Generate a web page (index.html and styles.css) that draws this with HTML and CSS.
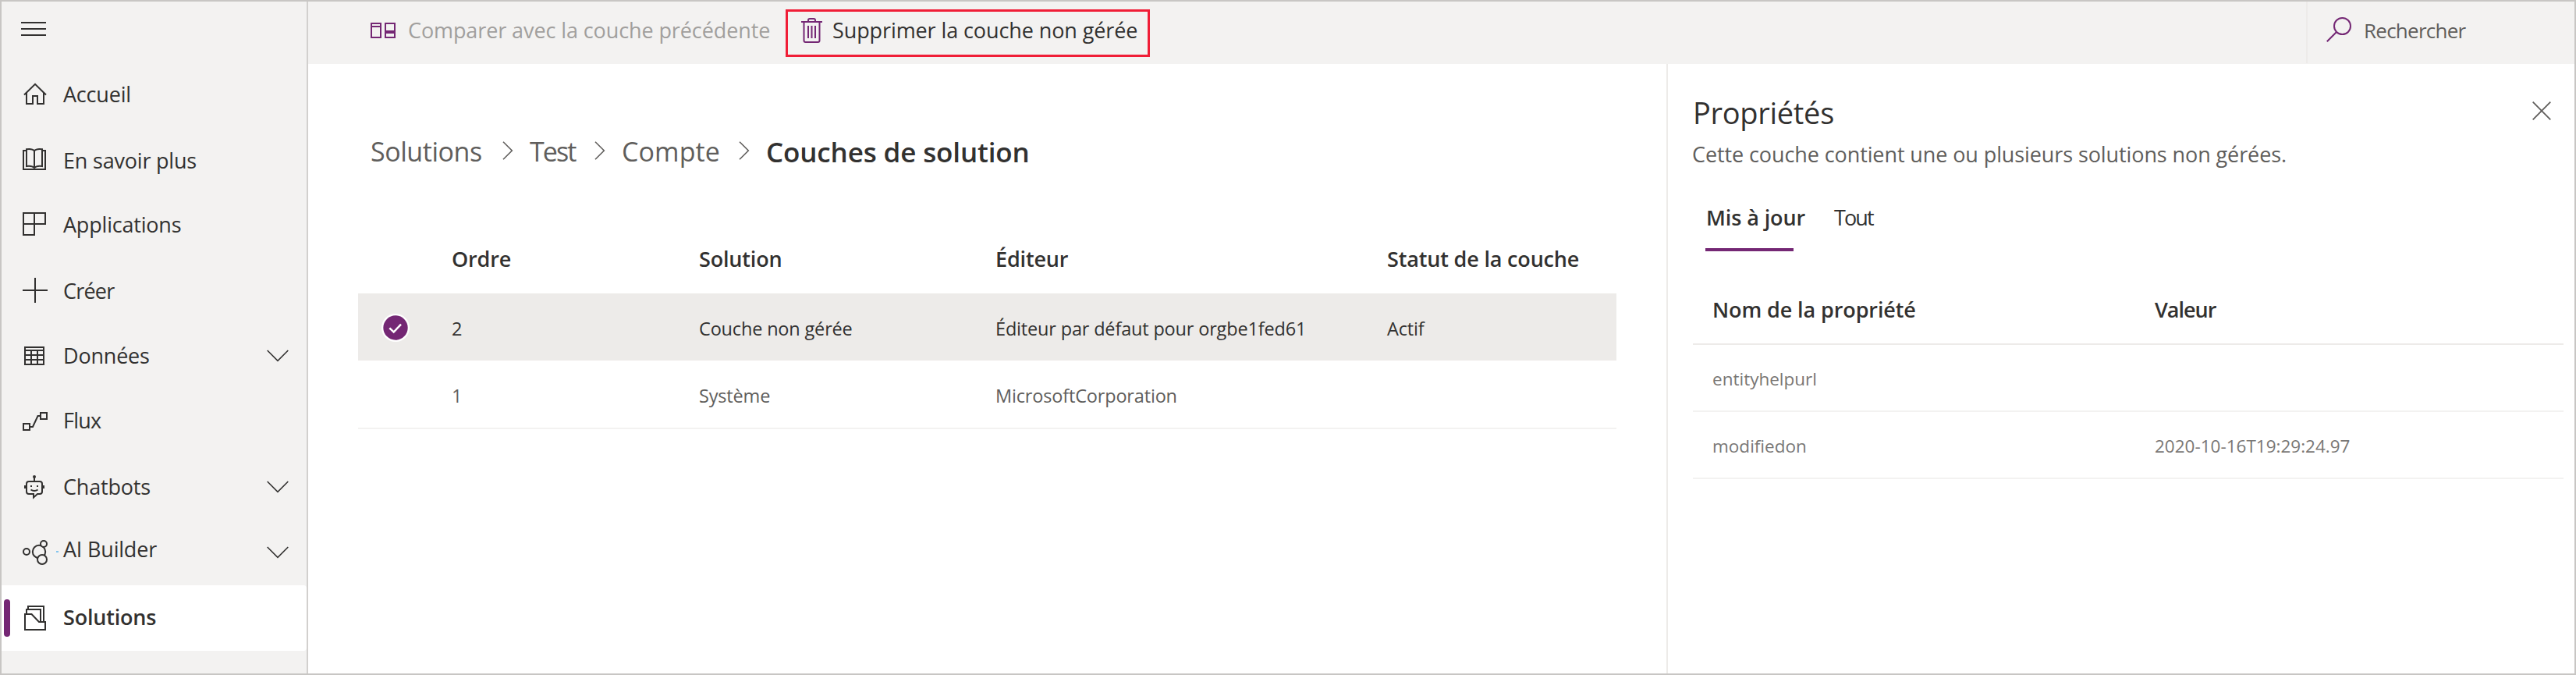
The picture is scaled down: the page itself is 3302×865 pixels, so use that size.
FILE: index.html
```html
<!DOCTYPE html>
<html lang="fr">
<head>
    <meta charset="UTF-8">
    <meta name="viewport" content="width=device-width, initial-scale=1.0">
    <title>Couches de solution</title>
    <link rel="stylesheet" href="styles.css">
</head>
<body>
    <nav class="sidebar">
        <div class="menu-toggle">
            <span></span><span></span><span></span>
        </div>
        <a class="nav-item home">
            <svg class="icon" viewBox="0 0 32 32"><path d="M2 17.5L16 3.8L30 17.5M5 15V29H13V19H19V29H27V15"/></svg>
            <span class="nav-label">Accueil</span>
        </a>
        <a class="nav-item learn">
            <svg class="icon" viewBox="0 0 32 32"><path d="M5 5H1V29H29V5H25M5 25V3.2C9 2.6 13 3 15 5.2C17 3 21 2.6 25 3.2V25C21 24.5 17 25 15 27C13 25 9 24.5 5 25ZM15 5V27"/></svg>
            <span class="nav-label">En savoir plus</span>
        </a>
        <a class="nav-item">
            <svg class="icon" viewBox="0 0 32 32"><path d="M1 1H29V15H1ZM1 1V29H15V1"/></svg>
            <span class="nav-label">Applications</span>
        </a>
        <a class="nav-item create">
            <svg class="icon" viewBox="0 0 32 32"><path d="M16 0V32M0 16H32"/></svg>
            <span class="nav-label">Créer</span>
        </a>
        <a class="nav-item">
            <svg class="icon" viewBox="0 0 32 32"><path d="M3 5H27V27H3ZM3 9H27M3 15H27M3 21H27M11 9V27M19 9V27"/></svg>
            <span class="nav-label">Données</span>
            <svg class="chevron" viewBox="0 0 28 16"><path d="M.7 1L14 14.3L27.3 1"/></svg>
        </a>
        <a class="nav-item flow">
            <svg class="icon" viewBox="0 0 32 32"><path d="M1 19H9V27H1ZM23 5H31V13H23ZM9 23H13L19.5 9H23"/></svg>
            <span class="nav-label">Flux</span>
        </a>
        <a class="nav-item">
            <svg class="icon" viewBox="0 0 32 32">
                <path d="M15 3V9M8 9H22Q25 9 25 12V22Q25 25 22 25H19L14 29.5V25H8Q5 25 5 22V12Q5 9 8 9ZM10.5 19.5Q15 22.5 19.5 19.5"/>
                <path class="solid" d="M2 14H5V18H2ZM25 14H28V18H25ZM10 14H12V16H10ZM18 14H20V16H18Z"/>
                <circle class="solid" cx="15" cy="3" r="2"/>
            </svg>
            <span class="nav-label">Chatbots</span>
            <svg class="chevron" viewBox="0 0 28 16"><path d="M.7 1L14 14.3L27.3 1"/></svg>
        </a>
        <a class="nav-item ai">
            <svg class="icon" viewBox="0 0 32 32">
                <circle cx="5" cy="15" r="4"/>
                <circle class="bubble" cx="21" cy="15" r="8.2"/>
                <circle class="bubble" cx="27" cy="5" r="4"/>
                <circle class="bubble" cx="25" cy="25" r="6"/>
                <path class="dash" d="M43 15H46"/>
            </svg>
            <span class="nav-label">AI Builder</span>
            <svg class="chevron" viewBox="0 0 28 16"><path d="M.7 1L14 14.3L27.3 1"/></svg>
        </a>
        <a class="nav-item active">
            <svg class="icon" viewBox="0 0 32 32"><path d="M3 11H11.5L21 21H29V31H3ZM5 11V5H23V21M7 5V1H27V21"/></svg>
            <span class="nav-label">Solutions</span>
        </a>
    </nav>

    <div class="page">
        <header class="toolbar">
            <button class="command compare" disabled>
                <svg width="32" height="20" viewBox="0 0 32 20"><path d="M1 1H13V19H1ZM1 5H13M19 1H31V19H19Z"/><path d="M19 12H31" stroke-width="4"/></svg>
                Comparer avec la couche précédente
            </button>
            <button class="command delete">
                <svg width="27" height="32" viewBox="0 0 27 32"><path d="M0 5H27M9 5V3Q9 1 11 1H16Q18 1 18 3V5M3.5 5V29Q3.5 31 5.5 31H21.5Q23.5 31 23.5 29V5M9 10V26M13.5 10V26M18 10V26"/></svg>
                Supprimer la couche non gérée
            </button>
            <div class="search">
                <svg width="32" height="32" viewBox="0 0 32 32"><circle cx="20.5" cy="11.5" r="10.5"/><path d="M13 19L.8 31.2"/></svg>
                <span>Rechercher</span>
            </div>
        </header>

        <div class="body">
            <main class="content">
                <div class="breadcrumb">
                    <span class="crumb">Solutions <svg class="sep" viewBox="0 0 14 24"><path d="M1 .7L12.3 12L1 23.3"/></svg></span>
                    <span class="crumb test">Test <svg class="sep" viewBox="0 0 14 24"><path d="M1 .7L12.3 12L1 23.3"/></svg></span>
                    <span class="crumb compte">Compte <svg class="sep" viewBox="0 0 14 24"><path d="M1 .7L12.3 12L1 23.3"/></svg></span>
                    <span class="crumb current">Couches de solution</span>
                </div>

                <div class="layers">
                    <div class="layer-row layer-head">
                        <span></span>
                        <span>Ordre</span>
                        <span>Solution</span>
                        <span>Éditeur</span>
                        <span>Statut de la couche</span>
                    </div>
                    <div class="layer-row selected">
                        <svg class="check" width="36" height="36" viewBox="0 0 36 36">
                            <circle cx="18" cy="18" r="18" fill="#fff"/>
                            <circle cx="18" cy="18" r="15.7" fill="#742774"/>
                            <path d="M10.3 18.3L15.7 23.5L25 13.7" fill="none" stroke="#fff" stroke-width="2.5"/>
                        </svg>
                        <span>2</span>
                        <span>Couche non gérée</span>
                        <span>Éditeur par défaut pour orgbe1fed61</span>
                        <span>Actif</span>
                    </div>
                    <div class="layer-row">
                        <span></span>
                        <span>1</span>
                        <span>Système</span>
                        <span>MicrosoftCorporation</span>
                        <span></span>
                    </div>
                </div>
            </main>

            <aside class="panel">
                <div class="panel-head">
                    <h2>Propriétés</h2>
                    <svg class="close" width="24" height="24" viewBox="0 0 24 24"><path d="M.7 .7L23.3 23.3M23.3 .7L.7 23.3"/></svg>
                </div>
                <p>Cette couche contient une ou plusieurs solutions non gérées.</p>
                <div class="tabs">
                    <span class="tab selected">Mis à jour</span>
                    <span class="tab all">Tout</span>
                </div>
                <div class="props">
                    <div class="prop-row prop-head"><span>Nom de la propriété</span><span class="value">Valeur</span></div>
                    <div class="prop-row"><span>entityhelpurl</span><span></span></div>
                    <div class="prop-row"><span>modifiedon</span><span>2020-10-16T19:29:24.97</span></div>
                </div>
            </aside>
        </div>
    </div>
</body>
</html>
```
FILE: styles.css
```css
* { box-sizing: border-box; }
body { display: flex; margin: 0; height: 865px; border: 2px solid #c8c6c4; background: #fff; color: #323130; font-family: "Open Sans", "Noto Sans", sans-serif; font-size: 27px; letter-spacing: -0.1px; overflow: hidden; }
svg { flex: none; fill: none; stroke: currentColor; stroke-width: 2; }

/* sidebar */
.sidebar { width: 393px; flex: none; background: #f3f2f1; border-right: 2px solid #d2d0ce; letter-spacing: -0.2px; }
.menu-toggle { display: flex; flex-direction: column; gap: 6px; height: 76px; padding: 26px 0 0 25px; }
.menu-toggle span { width: 32px; height: 2px; background: #323130; }
.nav-item { display: flex; align-items: center; height: 84px; padding: 0 23px 0 27px; position: relative; }
.icon { width: 32px; height: 32px; margin-right: 20px; overflow: visible; }
.icon .solid { fill: currentColor; stroke: none; }
.icon .bubble { fill: #f3f2f1; }
.icon .dash { stroke: #83c5ee; }
.nav-label { flex: 1; line-height: 36px; }
.chevron { width: 28px; height: 16px; stroke-width: 1.6; }
.home .nav-label, .create .nav-label { padding-top: 2px; }
.learn .nav-label { padding-top: 3px; }
.create .nav-label, .flow .nav-label { letter-spacing: -0.8px; }
.flow .nav-label { padding-bottom: 3px; }
.ai .nav-label { padding-bottom: 9px; }
.active { background: #fff; border-radius: 0 4px 4px 0; font-weight: 600; }
.active .nav-label { padding-bottom: 3px; }
.active::before { content: ""; position: absolute; left: 3px; top: 18px; width: 8px; height: 48px; border-radius: 4px; background: #742774; }

/* command bar */
.page { flex: 1; display: flex; flex-direction: column; min-width: 0; }
.toolbar { display: flex; align-items: flex-start; height: 80px; flex: none; padding-left: 80px; background: #f3f2f1; }
.toolbar svg { color: #742774; }
.command { display: flex; align-items: center; padding: 0; border: 0; background: none; color: #323130; font: inherit; letter-spacing: inherit; line-height: 37px; white-space: nowrap; }
.compare { width: 532px; margin-top: 18px; gap: 16px; color: #a19f9d; }
.delete { width: 467px; height: 61px; margin-top: 10px; padding: 0 0 8px 17px; gap: 13px; border: 3px solid #f01e37; }
.search { display: flex; align-items: center; gap: 16px; width: 344px; height: 79px; margin-left: auto; padding: 0 0 7px 24px; border-left: 2px solid #edebe9; color: #605e5c; font-size: 26px; letter-spacing: -0.75px; }
.search span { padding-top: 1px; }

.body { flex: 1; display: flex; min-height: 0; }
.content { flex: 1; padding: 88px 0 0 64px; }

/* breadcrumb */
.breadcrumb { display: grid; grid-template-columns: 204px 118px 185px auto; height: 48px; padding-left: 16px; font-size: 34px; line-height: 48px; letter-spacing: -0.45px; color: #605e5c; }
.crumb { display: flex; align-items: center; justify-content: space-between; height: 48px; }
.crumb.test { letter-spacing: -1.9px; }
.crumb.compte { letter-spacing: 0.1px; }
.crumb.current { padding-top: 1px; font-size: 35px; font-weight: 600; letter-spacing: -0.14px; color: #323130; }
.sep { width: 14px; height: 24px; margin: 0 21px 2px 0; stroke-width: 1.6; }

/* layers table */
.layers { width: 1613px; margin-top: 94px; }
.layer-row { display: grid; grid-template-columns: 120px 317px 380px 502px 1fr; align-items: center; height: 88px; border-bottom: 2px solid #f3f2f1; font-size: 23.5px; letter-spacing: -0.17px; color: #605e5c; }
.layer-row span { padding-top: 3px; }
.layer-head { height: 64px; align-items: start; border: 0; font-size: 27px; font-weight: 600; line-height: 40px; color: #323130; }
.layer-head span { padding: 0; }
.layer-row.selected { height: 86px; border: 0; background: #edebe9; color: #323130; }
.check { margin: 2px 0 0 30px; stroke: none; }

/* properties panel */
.panel { width: 1164px; flex: none; padding: 36px 14px 0 32px; border-left: 2px solid #edebe9; }
.panel-head { display: flex; align-items: center; justify-content: space-between; padding-right: 16px; }
.panel h2 { margin: 0; font-size: 38px; font-weight: 400; line-height: 52px; letter-spacing: -0.3px; }
.close { margin-bottom: 4px; color: #605e5c; stroke-width: 1.8; }
.panel p { margin: 9px 0 0 -1px; line-height: 37px; color: #605e5c; }
.tabs { display: flex; gap: 52px; margin-top: 43px; padding-left: 16px; line-height: 40px; }
.tab { height: 63px; white-space: nowrap; }
.tab.selected { width: 113px; padding-left: 1px; border-bottom: 4px solid #742774; font-weight: 600; }
.tab.all { letter-spacing: -1.9px; }
.props { margin-top: 55px; }
.prop-row { display: grid; grid-template-columns: 567px 1fr; align-items: center; height: 86px; padding: 3px 0 0 25px; border-bottom: 2px solid #f3f2f1; font-size: 22.5px; letter-spacing: 0; color: #797775; }
.prop-head { height: 65px; padding-top: 0; align-items: start; border-color: #edebe9; font-size: 27px; font-weight: 600; line-height: 40px; letter-spacing: -0.1px; color: #323130; }
.prop-head .value { letter-spacing: -1px; }
```
